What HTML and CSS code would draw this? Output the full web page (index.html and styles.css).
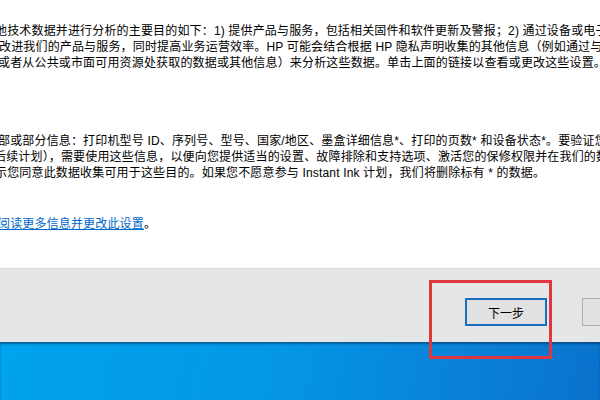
FILE: index.html
```html
<!DOCTYPE html>
<html lang="zh-CN">
<head>
  <meta charset="UTF-8">
  <title>HP 打印机设置 - 数据收集</title>
  <meta name="viewport" content="width=device-width, initial-scale=1.0">
  <link rel="stylesheet" href="styles.css">
</head>
<body>
  <!-- 对话框正文（左右两侧被截掉） -->
  <div class="content">
    <div class="para">
      <div class="line cut-5">他技术数据并进行分析的主要目的如下：1) 提供产品与服务，包括相关固件和软件更新及警报；2) 通过设备或电子邮件</div>
      <div class="line cut-1">改进我们的产品与服务，同时提高业务运营效率。HP 可能会结合根据 HP 隐私声明收集的其他信息（例如通过与第三方</div>
      <div class="line cut-2">或者从公共或市面可用资源处获取的数据或其他信息）来分析这些数据。单击上面的链接以查看或更改这些设置。</div>
    </div>

    <div class="para para-gap">
      <div class="line cut-2">部或部分信息：打印机型号 ID、序列号、型号、国家/地区、墨盒详细信息*、打印的页数* 和设备状态*。要验证您的资格</div>
      <div class="line cut-6">后续计划），需要使用这些信息，以便向您提供适当的设置、故障排除和支持选项、激活您的保修权限并在我们的数据库</div>
      <div class="line cut-5">示您同意此数据收集可用于这些目的。如果您不愿意参与 Instant Ink 计划，我们将删除标有 * 的数据。</div>
    </div>

    <div class="para link-gap">
      <div class="line cut-2"><a href="#" class="more-link">阅读更多信息并更改此设置</a>。</div>
    </div>
  </div>

  <!-- 底部按钮栏 -->
  <div class="footer">
    <div class="button-row">
      <button class="dlg-button default">下一步</button>
      <button class="dlg-button"></button>
    </div>
  </div>

  <!-- 桌面背景 -->
  <div class="desktop"></div>

  <!-- 红框标注 -->
  <div class="mark-box"></div>
</body>
</html>
```

FILE: styles.css
```css
body {
  margin: 0; padding: 0;
  width: 600px;
  height: 400px;
  overflow: hidden;
  position: relative;
  background: #fff;
  font-family: "Liberation Sans", "Noto Sans CJK SC", sans-serif;
  font-size: 12px;
  color: #000;
}

.content {
  height: 268px;
  box-sizing: border-box;
  padding-top: 23px;
  overflow: hidden;
  background: #fff;
}
.para {
  line-height: 16px;
}
.para-gap {
  margin-top: 62px;
}
.link-gap {
  margin-top: 35px;
}
.line {
  white-space: nowrap;
  letter-spacing: 0.16px;
}
.cut-1 { margin-left: -1px; }
.cut-2 { margin-left: -2px; }
.cut-5 { margin-left: -5px; }
.cut-6 { margin-left: -6px; }

.more-link {
  color: #0066cc;
  text-decoration: underline;
}

.footer {
  height: 74px;
  box-sizing: border-box;
  background: #e4e6e7;
  border-top: 1px solid #d6d8d9;
  overflow: hidden;
}
.button-row {
  display: flex;
  gap: 35px;
  padding: 29px 0 0 465px;
}
.dlg-button {
  flex: none;
  width: 82px;
  height: 28px;
  box-sizing: border-box;
  background: #e1e1e1;
  border: 1px solid #adadad;
  border-radius: 0;
  font-family: "Liberation Sans", "Noto Sans CJK SC", sans-serif;
  font-size: 12px;
  color: #000;
  padding: 0;
}
.dlg-button.default {
  border: 2px solid #1c6fbe;
}

.desktop {
  height: 58px;
  background: linear-gradient(100deg, #00a3ee 0%, #0497e6 45%, #0a7fd6 80%, #0a72cc 100%);
  box-shadow: inset 0 2px 2px rgba(10, 50, 80, 0.55);
}

.mark-box {
  position: absolute;
  left: 429px;
  top: 280px;
  width: 123px;
  height: 79px;
  box-sizing: border-box;
  border: 3px solid #e2363f;
}
```
